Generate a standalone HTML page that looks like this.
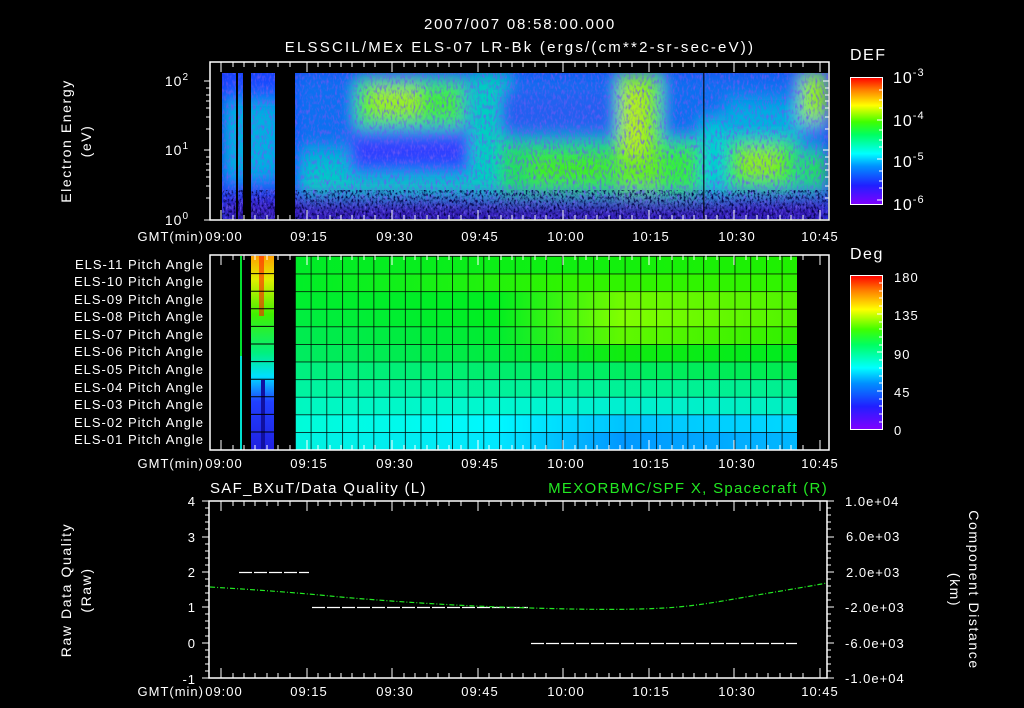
<!DOCTYPE html>
<html><head><meta charset="utf-8"><style>
html,body{margin:0;padding:0;background:#000;}
svg{display:block;font-family:"Liberation Sans",sans-serif;}
text{fill:#fff;font-size:13px;letter-spacing:1px;}
</style></head><body>
<svg width="1024" height="708" viewBox="0 0 1024 708" xmlns="http://www.w3.org/2000/svg">
<defs>
<filter id="blur" filterUnits="userSpaceOnUse" x="150" y="20" width="750" height="250"><feGaussianBlur stdDeviation="7 9"/></filter>
<filter id="noise" filterUnits="userSpaceOnUse" x="222" y="70" width="606" height="150">
<feTurbulence type="fractalNoise" baseFrequency="0.45 0.2" numOctaves="2" seed="3"/>
<feColorMatrix type="matrix" values="0 0 0 0 0.15  0 0 0 0 0.1  0 0 0 0 0.9  0 0 0 -2.2 1.2"/>
</filter>
<filter id="noise2" filterUnits="userSpaceOnUse" x="222" y="190" width="606" height="30">
<feTurbulence type="fractalNoise" baseFrequency="0.5 0.3" numOctaves="2" seed="9"/>
<feColorMatrix type="matrix" values="0 0 0 0 0  0 0 0 0 0  0 0 0 0 0.05  0 0 0 -3 1.6"/>
</filter>
<clipPath id="spec"><rect x="222" y="70" width="606" height="149"/></clipPath>
<linearGradient id="cb1" x1="0" y1="1" x2="0" y2="0">
<stop offset="0" stop-color="#8000ff"/><stop offset="0.15" stop-color="#2020ff"/><stop offset="0.3" stop-color="#0090ff"/><stop offset="0.4" stop-color="#00ffff"/><stop offset="0.55" stop-color="#00ff60"/><stop offset="0.65" stop-color="#40ff00"/><stop offset="0.78" stop-color="#ffff00"/><stop offset="0.9" stop-color="#ff8000"/><stop offset="1" stop-color="#ff0000"/>
</linearGradient>
</defs>

<text x="520" y="29" text-anchor="middle" style="font-size:15px;letter-spacing:1.8px">2007/007 08:58:00.000</text>
<text x="520" y="52" text-anchor="middle" style="font-size:15px;letter-spacing:2.2px">ELSSCIL/MEx ELS-07 LR-Bk  (ergs/(cm**2-sr-sec-eV))</text>

<g clip-path="url(#spec)">
<rect x="222" y="70" width="606" height="149" fill="#1838f0"/>
<g filter="url(#blur)">
<rect x="222" y="70" width="606" height="149" fill="#1848ff"/>
<rect x="295" y="70" width="533" height="80" fill="#1070f0"/>
<rect x="300" y="176" width="200" height="16" fill="#00e0b0"/>
<rect x="300" y="150" width="50" height="30" fill="#00c0d0"/>
<rect x="355" y="80" width="110" height="50" fill="#40f040"/>
<rect x="370" y="88" width="50" height="25" fill="#a0f020"/>
<rect x="350" y="128" width="130" height="35" fill="#3040ff"/>
<rect x="470" y="70" width="40" height="125" fill="#00d0c0"/>
<rect x="500" y="140" width="120" height="55" fill="#20e060"/>
<rect x="530" y="155" width="80" height="30" fill="#40f020"/>
<rect x="500" y="90" width="110" height="45" fill="#2060f0"/>
<rect x="617" y="72" width="45" height="125" fill="#60f020"/>
<rect x="622" y="85" width="25" height="70" fill="#b0f020"/>
<rect x="660" y="140" width="45" height="55" fill="#30f040"/>
<rect x="700" y="120" width="30" height="75" fill="#00d0d0"/>
<rect x="728" y="140" width="70" height="50" fill="#30f030"/>
<rect x="740" y="150" width="40" height="25" fill="#90f020"/>
<rect x="725" y="100" width="80" height="40" fill="#00b0e0"/>
<rect x="800" y="72" width="28" height="50" fill="#90f020"/>
<rect x="800" y="150" width="28" height="40" fill="#20e060"/>
<rect x="222" y="194" width="606" height="26" fill="#3020e0"/>
<rect x="222" y="207" width="606" height="13" fill="#400080"/>
<rect x="222" y="100" width="60" height="80" fill="#00b0e0"/>
</g>
<rect x="222" y="70" width="606" height="149" filter="url(#noise)"/>
<rect x="222" y="190" width="606" height="30" filter="url(#noise2)"/>
<rect x="236" y="70" width="2" height="150" fill="#000"/>
<rect x="243" y="70" width="8" height="150" fill="#000"/>
<rect x="275" y="70" width="20" height="150" fill="#000"/>
<rect x="222" y="70" width="606" height="3" fill="#000"/>
<rect x="703" y="70" width="1.5" height="150" fill="#000" opacity="0.7"/>
</g>
<rect x="210" y="62" width="619" height="158" fill="none" stroke="#fff" stroke-width="1.5"/>
<g stroke="#fff" stroke-width="1">
<path d="M204 81h6M204 150h6M204 220h6M206 129h4M206 117h4M206 108h4M206 101h4M206 95h4M206 88h4M206 198h4M206 186h4M206 177h4M206 170h4M206 164h4M206 157h4"/>
<path d="M829 81h-6M829 150h-6M829 129h-4M829 117h-4M829 108h-4M829 101h-4M829 95h-4M829 88h-4M829 198h-4M829 186h-4M829 177h-4M829 170h-4M829 164h-4M829 157h-4"/>
<path d="M221 220v-10M307 220v-10M392 220v-10M478 220v-10M563 220v-10M649 220v-10M734 220v-10M820 220v-10M221 62v10M307 62v10M392 62v10M478 62v10M563 62v10M649 62v10M734 62v10M820 62v10"/>
<path d="M233 220v-5M244 220v-5M255 220v-5M267 220v-5M278 220v-5M290 220v-5M318 220v-5M330 220v-5M341 220v-5M352 220v-5M364 220v-5M375 220v-5M404 220v-5M415 220v-5M427 220v-5M438 220v-5M449 220v-5M461 220v-5M489 220v-5M501 220v-5M512 220v-5M523 220v-5M535 220v-5M546 220v-5M575 220v-5M586 220v-5M597 220v-5M609 220v-5M620 220v-5M632 220v-5M660 220v-5M672 220v-5M683 220v-5M694 220v-5M706 220v-5M717 220v-5M746 220v-5M757 220v-5M768 220v-5M780 220v-5M791 220v-5M803 220v-5"/>
<path d="M233 62v5M244 62v5M255 62v5M267 62v5M278 62v5M290 62v5M318 62v5M330 62v5M341 62v5M352 62v5M364 62v5M375 62v5M404 62v5M415 62v5M427 62v5M438 62v5M449 62v5M461 62v5M489 62v5M501 62v5M512 62v5M523 62v5M535 62v5M546 62v5M575 62v5M586 62v5M597 62v5M609 62v5M620 62v5M632 62v5M660 62v5M672 62v5M683 62v5M694 62v5M706 62v5M717 62v5M746 62v5M757 62v5M768 62v5M780 62v5M791 62v5M803 62v5"/>
</g>
<text x="189" y="86" text-anchor="end" style="font-size:14px">10<tspan dy="-6" font-size="10">2</tspan></text>
<text x="189" y="155" text-anchor="end" style="font-size:14px">10<tspan dy="-6" font-size="10">1</tspan></text>
<text x="189" y="225" text-anchor="end" style="font-size:14px">10<tspan dy="-6" font-size="10">0</tspan></text>
<text transform="translate(71,141) rotate(-90)" text-anchor="middle" style="font-size:14px;letter-spacing:1.6px">Electron Energy</text>
<text transform="translate(91,141) rotate(-90)" text-anchor="middle" style="font-size:14px;letter-spacing:1.6px">(eV)</text>
<g style="font-size:14px;letter-spacing:1px">
<text x="204" y="241" text-anchor="end">GMT(min)</text>
<g text-anchor="middle"><text x="224" y="241">09:00</text><text x="309" y="241">09:15</text><text x="395" y="241">09:30</text><text x="480" y="241">09:45</text><text x="566" y="241">10:00</text><text x="651" y="241">10:15</text><text x="737" y="241">10:30</text><text x="820" y="241">10:45</text></g>
</g>
<text x="850" y="60" style="font-size:16px;letter-spacing:1.5px">DEF</text>
<rect x="850.5" y="77.5" width="32" height="127" fill="url(#cb1)" stroke="#fff"/>
<g stroke="#fff"><path d="M882 120h-5M882 159h-5M882 200h-5M882 90h-3M882 100h-3M882 108h-3M882 130h-3M882 140h-3M882 147h-3M882 171h-3M882 181h-3M882 188h-3"/></g>
<text x="893" y="83" style="font-size:16px">10<tspan dy="-7" font-size="11">-3</tspan></text>
<text x="893" y="126" style="font-size:16px">10<tspan dy="-7" font-size="11">-4</tspan></text>
<text x="893" y="167" style="font-size:16px">10<tspan dy="-7" font-size="11">-5</tspan></text>
<text x="893" y="210" style="font-size:16px">10<tspan dy="-7" font-size="11">-6</tspan></text>

<defs>
<linearGradient id="r1" x1="0" x2="1"><stop offset="0" stop-color="#00ec28"/><stop offset="0.55" stop-color="#10f010"/><stop offset="1" stop-color="#20f000"/></linearGradient>
<linearGradient id="r2" x1="0" x2="1"><stop offset="0" stop-color="#00ee28"/><stop offset="0.55" stop-color="#30f400"/><stop offset="1" stop-color="#30f400"/></linearGradient>
<linearGradient id="r3" x1="0" x2="1"><stop offset="0" stop-color="#00ee30"/><stop offset="0.4" stop-color="#00ee20"/><stop offset="0.65" stop-color="#70fa00"/><stop offset="1" stop-color="#50f400"/></linearGradient>
<linearGradient id="r4" x1="0" x2="1"><stop offset="0" stop-color="#00ee40"/><stop offset="0.4" stop-color="#00ee20"/><stop offset="0.65" stop-color="#80ff00"/><stop offset="1" stop-color="#50f400"/></linearGradient>
<linearGradient id="r5" x1="0" x2="1"><stop offset="0" stop-color="#00ec50"/><stop offset="0.4" stop-color="#00ec30"/><stop offset="0.65" stop-color="#60f800"/><stop offset="1" stop-color="#30f000"/></linearGradient>
<linearGradient id="r6" x1="0" x2="1"><stop offset="0" stop-color="#00ec60"/><stop offset="0.4" stop-color="#00ec40"/><stop offset="0.65" stop-color="#10ec10"/><stop offset="1" stop-color="#00ec20"/></linearGradient>
<linearGradient id="r7" x1="0" x2="1"><stop offset="0" stop-color="#00f080"/><stop offset="1" stop-color="#00ec50"/></linearGradient>
<linearGradient id="r8" x1="0" x2="1"><stop offset="0" stop-color="#00f4a0"/><stop offset="1" stop-color="#00f090"/></linearGradient>
<linearGradient id="r9" x1="0" x2="1"><stop offset="0" stop-color="#00f8c0"/><stop offset="0.4" stop-color="#00f8d0"/><stop offset="0.65" stop-color="#00f0d0"/><stop offset="1" stop-color="#00f0c0"/></linearGradient>
<linearGradient id="r10" x1="0" x2="1"><stop offset="0" stop-color="#00fcd8"/><stop offset="0.4" stop-color="#00f8ff"/><stop offset="0.65" stop-color="#00c4ff"/><stop offset="1" stop-color="#00d8ff"/></linearGradient>
<linearGradient id="r11" x1="0" x2="1"><stop offset="0" stop-color="#00f4e0"/><stop offset="0.4" stop-color="#00e8ff"/><stop offset="0.65" stop-color="#0098ff"/><stop offset="1" stop-color="#00b8ff"/></linearGradient>
<linearGradient id="strip" x1="0" y1="0" x2="0" y2="1"><stop offset="0" stop-color="#ffa000"/><stop offset="0.12" stop-color="#e0f000"/><stop offset="0.3" stop-color="#40f000"/><stop offset="0.5" stop-color="#00f080"/><stop offset="0.62" stop-color="#00e0ff"/><stop offset="0.75" stop-color="#2040ff"/><stop offset="1" stop-color="#2020e0"/></linearGradient>
<linearGradient id="cb2" x1="0" y1="1" x2="0" y2="0">
<stop offset="0" stop-color="#8000ff"/><stop offset="0.15" stop-color="#2020ff"/><stop offset="0.3" stop-color="#0090ff"/><stop offset="0.4" stop-color="#00ffff"/><stop offset="0.55" stop-color="#00ff60"/><stop offset="0.65" stop-color="#40ff00"/><stop offset="0.78" stop-color="#ffff00"/><stop offset="0.9" stop-color="#ff8000"/><stop offset="1" stop-color="#ff0000"/>
</linearGradient>
<pattern id="grid" x="295" y="256" width="15.7" height="17.6" patternUnits="userSpaceOnUse"><path d="M0 0V17.6M0 0H15.7" stroke="#000" stroke-width="1.5" fill="none"/></pattern>
</defs>
<g>
<rect x="295" y="256" width="502" height="18" fill="url(#r1)"/>
<rect x="295" y="273.6" width="502" height="18" fill="url(#r2)"/>
<rect x="295" y="291.2" width="502" height="18" fill="url(#r3)"/>
<rect x="295" y="308.8" width="502" height="18" fill="url(#r4)"/>
<rect x="295" y="326.4" width="502" height="18" fill="url(#r5)"/>
<rect x="295" y="344" width="502" height="18" fill="url(#r6)"/>
<rect x="295" y="361.6" width="502" height="18" fill="url(#r7)"/>
<rect x="295" y="379.2" width="502" height="18" fill="url(#r8)"/>
<rect x="295" y="396.8" width="502" height="18" fill="url(#r9)"/>
<rect x="295" y="414.4" width="502" height="18" fill="url(#r10)"/>
<rect x="295" y="432" width="502" height="18" fill="url(#r11)"/>
<rect x="295" y="256" width="503" height="194" fill="url(#grid)"/>
<rect x="251" y="256" width="23" height="194" fill="url(#strip)"/>
<rect x="259" y="256" width="5" height="60" fill="#ff2000" opacity="0.6"/>
<rect x="261" y="380" width="4" height="70" fill="#1010a0"/>
<rect x="240" y="256" width="2" height="100" fill="#00e030"/>
<rect x="240" y="356" width="2" height="94" fill="#00e0d0"/>
<path d="M251 273.6H274M251 291.2H274M251 308.8H274M251 326.4H274M251 344H274M251 361.6H274M251 379.2H274M251 396.8H274M251 414.4H274M251 432H274" stroke="#000" stroke-width="1"/>
</g>
<rect x="210" y="255" width="619" height="195" fill="none" stroke="#fff" stroke-width="1.5"/>
<g stroke="#fff" stroke-width="1">
<path d="M221 450v-10M307 450v-10M392 450v-10M478 450v-10M563 450v-10M649 450v-10M734 450v-10M820 450v-10M221 255v10M307 255v10M392 255v10M478 255v10M563 255v10M649 255v10M734 255v10M820 255v10"/>
<path d="M233 450v-5M244 450v-5M255 450v-5M267 450v-5M278 450v-5M290 450v-5M318 450v-5M330 450v-5M341 450v-5M352 450v-5M364 450v-5M375 450v-5M404 450v-5M415 450v-5M427 450v-5M438 450v-5M449 450v-5M461 450v-5M489 450v-5M501 450v-5M512 450v-5M523 450v-5M535 450v-5M546 450v-5M575 450v-5M586 450v-5M597 450v-5M609 450v-5M620 450v-5M632 450v-5M660 450v-5M672 450v-5M683 450v-5M694 450v-5M706 450v-5M717 450v-5M746 450v-5M757 450v-5M768 450v-5M780 450v-5M791 450v-5M803 450v-5"/>
<path d="M233 255v5M244 255v5M255 255v5M267 255v5M278 255v5M290 255v5M318 255v5M330 255v5M341 255v5M352 255v5M364 255v5M375 255v5M404 255v5M415 255v5M427 255v5M438 255v5M449 255v5M461 255v5M489 255v5M501 255v5M512 255v5M523 255v5M535 255v5M546 255v5M575 255v5M586 255v5M597 255v5M609 255v5M620 255v5M632 255v5M660 255v5M672 255v5M683 255v5M694 255v5M706 255v5M717 255v5M746 255v5M757 255v5M768 255v5M780 255v5M791 255v5M803 255v5"/>
</g>
<g text-anchor="end" style="font-size:13px;letter-spacing:1px">
<text x="204" y="269">ELS-11 Pitch Angle</text>
<text x="204" y="286">ELS-10 Pitch Angle</text>
<text x="204" y="304">ELS-09 Pitch Angle</text>
<text x="204" y="321">ELS-08 Pitch Angle</text>
<text x="204" y="339">ELS-07 Pitch Angle</text>
<text x="204" y="356">ELS-06 Pitch Angle</text>
<text x="204" y="374">ELS-05 Pitch Angle</text>
<text x="204" y="392">ELS-04 Pitch Angle</text>
<text x="204" y="409">ELS-03 Pitch Angle</text>
<text x="204" y="427">ELS-02 Pitch Angle</text>
<text x="204" y="444">ELS-01 Pitch Angle</text>
</g>
<g style="font-size:14px;letter-spacing:1px">
<text x="204" y="468" text-anchor="end">GMT(min)</text>
<g text-anchor="middle"><text x="224" y="468">09:00</text><text x="309" y="468">09:15</text><text x="395" y="468">09:30</text><text x="480" y="468">09:45</text><text x="566" y="468">10:00</text><text x="651" y="468">10:15</text><text x="737" y="468">10:30</text><text x="820" y="468">10:45</text></g>
</g>
<text x="850" y="259" style="font-size:16px;letter-spacing:1.5px">Deg</text>
<rect x="850.5" y="275.5" width="32" height="154" fill="url(#cb2)" stroke="#fff"/>
<g stroke="#fff"><path d="M882 314h-5M882 352h-5M882 391h-5M882 283h-3M882 291h-3M882 298h-3M882 306h-3M882 322h-3M882 329h-3M882 337h-3M882 345h-3M882 360h-3M882 368h-3M882 376h-3M882 383h-3M882 399h-3M882 406h-3M882 414h-3M882 422h-3"/></g>
<g style="font-size:16px;letter-spacing:1px">
<text x="894" y="282">180</text><text x="894" y="320">135</text><text x="894" y="359">90</text><text x="894" y="397">45</text><text x="894" y="435">0</text>
</g>

<text x="210" y="493" style="font-size:15px;letter-spacing:1.3px">SAF_BXuT/Data Quality (L)</text>
<text x="828" y="493" text-anchor="end" style="font-size:15px;letter-spacing:1.3px;fill:#22e822">MEXORBMC/SPF X, Spacecraft (R)</text>
<rect x="209" y="501" width="618" height="177" fill="none" stroke="#fff" stroke-width="1.5"/>
<g stroke="#fff" stroke-width="1">
<path d="M202 501h7M202 537h7M202 572h7M202 607h7M202 643h7M202 678h7"/>
<path d="M205 508h4M205 515h4M205 522h4M205 529h4M205 544h4M205 551h4M205 558h4M205 565h4M205 579h4M205 586h4M205 593h4M205 600h4M205 614h4M205 621h4M205 628h4M205 636h4M205 650h4M205 657h4M205 664h4M205 671h4"/>
<path d="M827 501h7M827 537h7M827 572h7M827 607h7M827 643h7M827 678h7"/>
<path d="M827 508h4M827 515h4M827 522h4M827 529h4M827 544h4M827 551h4M827 558h4M827 565h4M827 579h4M827 586h4M827 593h4M827 600h4M827 614h4M827 621h4M827 628h4M827 636h4M827 650h4M827 657h4M827 664h4M827 671h4"/>
<path d="M221 678v-10M307 678v-10M392 678v-10M478 678v-10M563 678v-10M649 678v-10M734 678v-10M820 678v-10M221 501v10M307 501v10M392 501v10M478 501v10M563 501v10M649 501v10M734 501v10M820 501v10"/>
<path d="M233 678v-5M244 678v-5M255 678v-5M267 678v-5M278 678v-5M290 678v-5M318 678v-5M330 678v-5M341 678v-5M352 678v-5M364 678v-5M375 678v-5M404 678v-5M415 678v-5M427 678v-5M438 678v-5M449 678v-5M461 678v-5M489 678v-5M501 678v-5M512 678v-5M523 678v-5M535 678v-5M546 678v-5M575 678v-5M586 678v-5M597 678v-5M609 678v-5M620 678v-5M632 678v-5M660 678v-5M672 678v-5M683 678v-5M694 678v-5M706 678v-5M717 678v-5M746 678v-5M757 678v-5M768 678v-5M780 678v-5M791 678v-5M803 678v-5"/>
<path d="M233 501v5M244 501v5M255 501v5M267 501v5M278 501v5M290 501v5M318 501v5M330 501v5M341 501v5M352 501v5M364 501v5M375 501v5M404 501v5M415 501v5M427 501v5M438 501v5M449 501v5M461 501v5M489 501v5M501 501v5M512 501v5M523 501v5M535 501v5M546 501v5M575 501v5M586 501v5M597 501v5M609 501v5M620 501v5M632 501v5M660 501v5M672 501v5M683 501v5M694 501v5M706 501v5M717 501v5M746 501v5M757 501v5M768 501v5M780 501v5M791 501v5M803 501v5"/>
</g>
<g stroke="#fff" stroke-width="1.2" stroke-dasharray="13 2">
<path d="M239 572.5H309"/>
<path d="M312 607.5H528"/>
<path d="M531 643.5H797"/>
</g>
<path d="M210 587 C260 590 300 593 330 596 S440 605 500 607 S600 610 640 609 S700 605 740 598 S800 588 827 583" fill="none" stroke="#22e822" stroke-width="1.2" stroke-dasharray="5 2 1 2"/>
<g text-anchor="end" style="font-size:15px">
<text x="196" y="506">4</text><text x="196" y="542">3</text><text x="196" y="577">2</text><text x="196" y="612">1</text><text x="196" y="648">0</text><text x="196" y="684">-1</text>
</g>
<g style="font-size:13px;letter-spacing:0.8px">
<text x="845" y="506">1.0e+04</text><text x="846" y="541">6.0e+03</text><text x="846" y="577">2.0e+03</text><text x="845" y="612">-2.0e+03</text><text x="845" y="648">-6.0e+03</text><text x="845" y="683">-1.0e+04</text>
</g>
<text transform="translate(71,590) rotate(-90)" text-anchor="middle" style="font-size:14px;letter-spacing:1.6px">Raw Data Quality</text>
<text transform="translate(91,590) rotate(-90)" text-anchor="middle" style="font-size:14px;letter-spacing:1.6px">(Raw)</text>
<text transform="translate(969,590) rotate(90)" text-anchor="middle" style="font-size:14px;letter-spacing:1.6px">Component Distance</text>
<text transform="translate(950,590) rotate(90)" text-anchor="middle" style="font-size:14px;letter-spacing:1.6px">(km)</text>
<g style="font-size:14px;letter-spacing:1px">
<text x="204" y="696" text-anchor="end">GMT(min)</text>
<g text-anchor="middle"><text x="224" y="696">09:00</text><text x="309" y="696">09:15</text><text x="395" y="696">09:30</text><text x="480" y="696">09:45</text><text x="566" y="696">10:00</text><text x="651" y="696">10:15</text><text x="737" y="696">10:30</text><text x="820" y="696">10:45</text></g>
</g>
</svg>
</body></html>
